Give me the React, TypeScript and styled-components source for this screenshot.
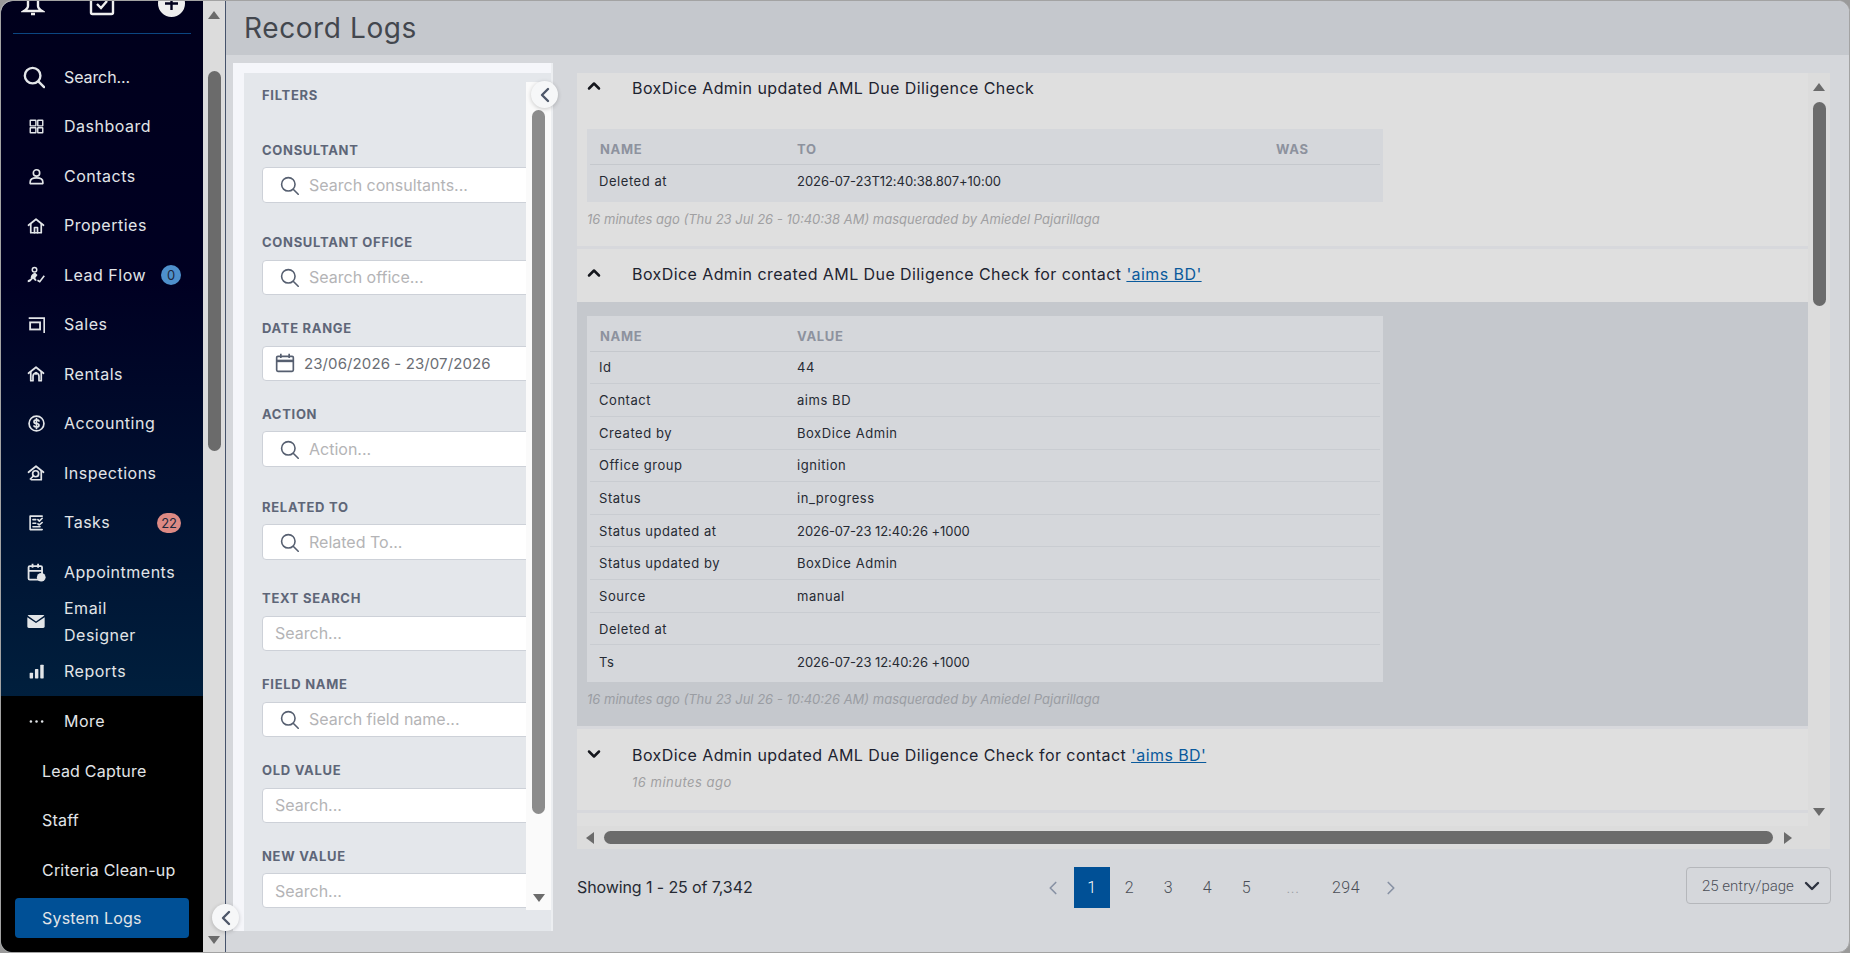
import React from "react";
import styled, { createGlobalStyle } from "styled-components";
import { ChevronDown, ChevronLeft, ChevronRight, ChevronUp } from "lucide-react";

const font = `Inter, "Noto Sans", sans-serif`;

const GlobalStyle = createGlobalStyle`
  html, body { margin: 0; padding: 0; background: #9a9a9a; }
  * { box-sizing: border-box; }
  body { font-family: ${font}; }
`;

const Frame = styled.div`
  width: 1850px;
  height: 953px;
  display: flex;
  overflow: hidden;
  position: relative;
  border-radius: 12px;
  border: 1px solid #a3a3a3;
  background: #d5d7db;
`;

const Side = styled.aside`
  width: 202px;
  flex: none;
  display: flex;
  flex-direction: column;
  background: linear-gradient(#00001c 0, #000022 280px, #001f3d 696px);
  color: #e2e5e8;
  font-size: 16px;
  letter-spacing: 0.5px;
  border-radius: 12px 0 0 12px;
`;

const TopIcons = styled.div`
  height: 33px;
  margin: 0 12px 0 12px;
  padding: 0 6px 0 8px;
  border-bottom: 1px solid #0b4682;
  display: flex;
  justify-content: space-between;
  overflow: hidden;
  color: #eee;
`;

const NavList = styled.div`
  padding: 18.4px 0 0.6px;
`;

const NavRow = styled.div`
  height: 49.5px;
  display: flex;
  align-items: center;
  position: relative;
  padding-left: 24px;
`;

const NavIcon = styled.span`
  width: 22px;
  height: 22px;
  display: flex;
  align-items: center;
  justify-content: center;
  margin-right: 17px;
  flex: none;
`;

const SearchIcon = styled(NavIcon)`
  margin-left: -2px;
  margin-right: 19px;
`;

const NavText = styled.span`
  line-height: 27px;
`;

const SearchText = styled(NavText)`
  letter-spacing: -0.1px;
`;

const Badge = styled.span<{ $bg: string }>`
  position: absolute;
  right: 22px;
  top: 50%;
  transform: translateY(-50%);
  min-width: 20px;
  height: 20px;
  padding: 0 4px;
  border-radius: 10px;
  background: ${(p) => p.$bg};
  color: #20283c;
  font-size: 13px;
  letter-spacing: 0;
  display: flex;
  align-items: center;
  justify-content: center;
`;

const MoreBlock = styled.div`
  flex: 1;
  background: #000;
`;

const SubRow = styled.div<{ $active?: boolean }>`
  height: ${(p) => (p.$active ? 40 : 49.5)}px;
  margin: ${(p) => (p.$active ? "4px 14px 0" : "0 14px")};
  padding-left: 27px;
  display: flex;
  align-items: center;
  border-radius: 4px;
  letter-spacing: 0.2px;
  background: ${(p) => (p.$active ? "#005096" : "transparent")};
`;

const Rail = styled.div`
  width: 23px;
  flex: none;
  background: #dcdcdc;
  border-right: 1px solid #46536b;
  position: relative;
  display: flex;
  flex-direction: column;
  align-items: center;
  padding-top: 10px;
`;

const RailThumb = styled.div`
  width: 13px;
  height: 380px;
  margin-top: 52px;
  background: #6b6b6b;
  border-radius: 7px;
`;

const Arrow = styled.div<{ $dir: "up" | "down" | "left" | "right" }>`
  width: 0;
  height: 0;
  flex: none;
  ${(p) =>
    p.$dir === "up"
      ? "border-left: 6px solid transparent; border-right: 6px solid transparent; border-bottom: 8px solid #6b6b6b;"
      : p.$dir === "down"
      ? "border-left: 6px solid transparent; border-right: 6px solid transparent; border-top: 8px solid #6b6b6b;"
      : p.$dir === "left"
      ? "border-top: 6px solid transparent; border-bottom: 6px solid transparent; border-right: 8px solid #6b6b6b;"
      : "border-top: 6px solid transparent; border-bottom: 6px solid transparent; border-left: 8px solid #6b6b6b;"}
`;

const RailArrowBottom = styled.div`
  position: absolute;
  bottom: 8px;
`;

const RoundToggle = styled.button<{ $x: number; $y: number }>`
  position: absolute;
  left: ${(p) => p.$x}px;
  top: ${(p) => p.$y}px;
  width: 27px;
  height: 27px;
  border: 0;
  padding: 0;
  border-radius: 50%;
  background: #f6f7f8;
  box-shadow: 0 1px 4px rgba(0, 0, 0, 0.2);
  color: #4e5769;
  display: flex;
  align-items: center;
  justify-content: center;
  z-index: 3;
`;

const Main = styled.main`
  flex: 1;
  min-width: 0;
  display: flex;
  flex-direction: column;
`;

const Header = styled.header`
  height: 54px;
  flex: none;
  background: #c5c8cd;
  padding: 0 0 1px 18px;
  display: flex;
  align-items: center;
  font-size: 28px;
  letter-spacing: 0.6px;
  color: #43474e;
`;

const Body = styled.div`
  flex: 1;
  min-height: 0;
  display: flex;
  padding: 8px 20px 0 7px;
`;

const FilterPanel = styled.section`
  width: 320px;
  height: 868px;
  flex: none;
  background: #f5f6fa;
  border-right: 2px solid #eceef1;
  padding: 10px 0 0 11px;
  display: flex;
  position: relative;
`;

const FilterInner = styled.div`
  width: 307px;
  height: 858px;
  flex: none;
  background: #e4e7eb;
  position: relative;
  overflow: hidden;
  padding: 13px 0 0 18px;
`;

const FilterScroll = styled.div`
  position: absolute;
  right: 0;
  top: 9px;
  width: 25px;
  height: 828px;
  background: #fafafa;
  display: flex;
  flex-direction: column;
  align-items: center;
`;

const FilterThumb = styled.div`
  margin-top: 28px;
  width: 13px;
  height: 704px;
  background: #8c8c8c;
  border-radius: 7px;
`;

const FilterScrollEnd = styled.div`
  margin-top: 80px;
`;

const FilterTitle = styled.div`
  font-size: 13px;
  font-weight: 700;
  letter-spacing: 0.7px;
  color: #5e6678;
  line-height: 18px;
  margin-bottom: 36.5px;
`;

const FilterLabel = styled(FilterTitle)`
  margin-bottom: 8.5px;
`;

const FieldGroup = styled.div<{ $gap: number }>`
  margin-bottom: ${(p) => p.$gap}px;
`;

const InputBox = styled.div<{ $tall?: boolean; $iconPad?: number }>`
  width: 290px;
  height: ${(p) => (p.$tall ? 36 : 35)}px;
  background: #fff;
  border: 1px solid #cdd1d8;
  border-radius: 4px;
  display: flex;
  align-items: center;
  padding-left: ${(p) => p.$iconPad ?? 12}px;
  color: #b4b4b6;
  font-size: 16px;
  letter-spacing: 0;
`;

const InputIcon = styled.span`
  display: flex;
  color: #565f70;
  margin-right: 10px;
`;

const DateIcon = styled(InputIcon)`
  margin-right: 9px;
`;

const DateText = styled.span`
  color: #6b6e75;
  font-size: 15px;
  letter-spacing: 0.1px;
`;

const LogColumn = styled.div`
  width: 1253px;
  margin-left: 24px;
  display: flex;
  flex-direction: column;
  flex: none;
`;

const LogViewport = styled.div`
  height: 776px;
  background: #dfdfdf;
  position: relative;
  margin-top: 10px;
  overflow: hidden;
  display: flex;
  flex-direction: column;
  flex: none;
`;

const LogScroll = styled.div`
  flex: 1;
  min-height: 0;
  width: 1231px;
  overflow: hidden;
  background: #d7d8dc;
`;

const LogItem = styled.div`
  background: #dfdfdf;
  margin-bottom: 3px;
`;

const LogHead = styled.div<{ $h: number }>`
  height: ${(p) => p.$h}px;
  position: relative;
  padding: 0 0 0 55px;
  display: flex;
  flex-direction: column;
  color: #1d2330;
  font-size: 16px;
  letter-spacing: 0.42px;
`;

const LogTitle = styled.div<{ $top: number }>`
  margin-top: ${(p) => p.$top}px;
  line-height: 22px;
`;

const HeadChevron = styled.span<{ $top: number }>`
  position: absolute;
  left: 7px;
  top: ${(p) => p.$top}px;
  color: #14161c;
  display: flex;
`;

const Linked = styled.a`
  color: #0a5a9c;
  text-decoration: underline;
`;

const Meta = styled.div<{ $pad?: string; $dim?: boolean }>`
  font-style: italic;
  font-size: 13px;
  letter-spacing: 0;
  color: ${(p) => (p.$dim ? "#9a9da3" : "#a0a0a2")};
  padding: ${(p) => p.$pad ?? "0"};
  line-height: 18px;
`;

const ShortMeta = styled(Meta)`
  letter-spacing: 0.5px;
`;

const LogBody = styled.div<{ $bg: string; $pad: string }>`
  background: ${(p) => p.$bg};
  padding: ${(p) => p.$pad};
`;

const Table = styled.div`
  width: 796px;
  background: #d5d7db;
  padding: 0 3px 4px;
`;

const HeadCells = styled.div`
  height: 36px;
  display: grid;
  grid-template-columns: 197px 479px 1fr;
  align-items: center;
  border-bottom: 1px solid #c5c8cd;
  padding: 5px 0 0 10px;
  color: #8d929e;
  font-weight: 700;
  font-size: 13px;
  letter-spacing: 0.7px;
`;

const Cells = styled.div<{ $last?: boolean }>`
  height: 32.65px;
  display: grid;
  grid-template-columns: 198px 479px 1fr;
  align-items: center;
  border-bottom: ${(p) => (p.$last ? "0" : "1px solid #c9ccd1")};
  padding: 0 0 0 9px;
  color: #262a33;
  font-size: 13px;
  letter-spacing: 0.55px;
`;

const StampCell = styled.span`
  letter-spacing: -0.05px;
`;

const HScroll = styled.div`
  height: 23px;
  width: 1253px;
  flex: none;
  display: flex;
  align-items: center;
  padding-left: 9px;
  background: #dcdcdc;
`;

const HThumb = styled.div`
  width: 1169px;
  height: 13px;
  background: #6b6b6b;
  border-radius: 7px;
  margin: 0 11px 0 10px;
`;

const VScroll = styled.div`
  position: absolute;
  right: 0;
  top: 0;
  bottom: 23px;
  width: 22px;
  display: flex;
  flex-direction: column;
  align-items: center;
  padding-top: 10px;
  background: #dcdcdc;
`;

const VThumb = styled.div`
  width: 13px;
  height: 204px;
  margin-top: 11px;
  background: #6b6b6b;
  border-radius: 7px;
`;

const VEnd = styled.div`
  margin-top: auto;
  margin-bottom: 10px;
`;

const Footer = styled.div`
  flex: 1;
  display: flex;
  align-items: center;
  position: relative;
  font-size: 16px;
  letter-spacing: -0.1px;
  color: #262a33;
  padding-bottom: 28px;
`;

const Pager = styled.div`
  position: absolute;
  left: 465px;
  top: 18px;
  display: flex;
  align-items: center;
  height: 41px;
  font-family: Roboto, sans-serif;
  font-weight: 300;
  font-size: 16px;
  letter-spacing: 0.5px;
`;

const PageCell = styled.span<{ $active?: boolean; $w?: number; $dim?: boolean }>`
  width: ${(p) => p.$w ?? 39}px;
  height: 41px;
  display: flex;
  align-items: center;
  justify-content: center;
  background: ${(p) => (p.$active ? "#005096" : "transparent")};
  color: ${(p) => (p.$active ? "#fff" : p.$dim ? "#9a9da3" : "#4a4e57")};
`;

const PagerArrow = styled.span<{ $left?: number; $right?: number }>`
  width: 22px;
  margin-left: ${(p) => p.$left ?? 0}px;
  margin-right: ${(p) => p.$right ?? 0}px;
  display: flex;
  justify-content: center;
  color: #8791a3;
`;

const PerPage = styled.div`
  position: absolute;
  right: -1px;
  top: 18px;
  width: 145px;
  height: 37px;
  border: 1px solid #b5b7bb;
  border-radius: 4px;
  font-family: Roboto, sans-serif;
  font-weight: 300;
  font-size: 15px;
  letter-spacing: 0;
  color: #4a4e57;
  display: flex;
  align-items: center;
  justify-content: space-between;
  padding: 0 6px 0 15px;
`;

/* sidebar icons, drawn to match the reference */
const Glyph = ({ children, size = 17 }: { children: React.ReactNode; size?: number }) => (
  <svg width={size} height={size} viewBox="0 0 24 24" fill="none" stroke="currentColor" strokeWidth="2.3" strokeLinecap="round" strokeLinejoin="round">
    {children}
  </svg>
);

const icons: Record<string, React.ReactNode> = {
  dashboard: (
    <Glyph size={15}>
      <rect x="2" y="2" width="9" height="9" rx="0.5" />
      <rect x="14" y="2" width="8" height="9" rx="0.5" />
      <rect x="2" y="14" width="9" height="8" rx="0.5" />
      <rect x="14" y="14" width="8" height="8" rx="0.5" />
    </Glyph>
  ),
  contacts: (
    <Glyph size={17}>
      <circle cx="12" cy="7" r="4.5" />
      <path d="M3 22v-2c0-4 3.5-6 9-6s9 2 9 6v2z" />
    </Glyph>
  ),
  properties: (
    <Glyph size={18}>
      <path d="M2 11 12 3l10 8" />
      <path d="M5 9v12h14V9" />
      <path d="M10 21v-7h4v7" />
    </Glyph>
  ),
  leadflow: (
    <svg width="18" height="18" viewBox="0 0 24 24" fill="currentColor">
      <circle cx="10" cy="5" r="3" fill="none" stroke="currentColor" strokeWidth="2" />
      <path d="M5 15c.5-3 3-6 6-6l3 3-3 4 2 3-2 1-3-3-4 4-3 .5V19l4-2z" />
      <path d="m14 19 3 2 6-8" fill="none" stroke="currentColor" strokeWidth="2.2" />
    </svg>
  ),
  sales: (
    <svg width="17" height="17" viewBox="0 0 24 24" fill="none" stroke="currentColor" strokeWidth="2.6">
      <path d="M1 3h22v21" />
      <rect x="3" y="9" width="14" height="10" />
    </svg>
  ),
  rentals: (
    <Glyph size={18}>
      <path d="M2 11 12 3l10 8" />
      <path d="M5 9v12h3v-6a4 4 0 0 1 8 0v6h3V9" />
      <circle cx="12" cy="11" r="1" />
    </Glyph>
  ),
  accounting: (
    <svg width="17" height="17" viewBox="0 0 24 24" fill="none" stroke="currentColor" strokeWidth="2.4" strokeLinecap="round">
      <circle cx="12" cy="12" r="10.5" />
      <path d="M15.5 8.5c-.6-1-1.8-1.5-3.5-1.5-2 0-3.5 1-3.5 2.5S10 12 12 12s3.5 1 3.5 2.5S14 17 12 17c-1.7 0-2.9-.5-3.5-1.5M12 5v14" />
    </svg>
  ),
  inspections: (
    <Glyph size={18}>
      <path d="M2 11 12 3l10 8" />
      <path d="M6 21h13V9" />
      <circle cx="11.5" cy="13" r="4" />
      <path d="m8.5 16-4 4" />
    </Glyph>
  ),
  tasks: (
    <Glyph size={17}>
      <path d="M20 3H3v19h17" />
      <path d="M7 8h4M7 13h4M7 18h10M14 8l2 2 4-4M14 14l2 1.5 4-3.5" />
    </Glyph>
  ),
  appointments: (
    <svg width="19" height="19" viewBox="0 0 24 24" fill="none" stroke="currentColor" strokeWidth="2.3">
      <rect x="2" y="4" width="17" height="17" rx="1.5" />
      <path d="M2 10h17M7 1v5M14 1v5" />
      <circle cx="18" cy="18" r="5.5" fill="currentColor" stroke="none" />
    </svg>
  ),
  email: (
    <svg width="18" height="13" viewBox="0 0 24 18" fill="currentColor">
      <path d="M2 0h20c.7 0 1.3.3 1.6.8L12 9 .4.8C.7.3 1.3 0 2 0z" />
      <path d="M0 3v13c0 1.1.9 2 2 2h20c1.1 0 2-.9 2-2V3l-12 8z" />
    </svg>
  ),
  reports: (
    <svg width="15" height="15" viewBox="0 0 24 24" fill="currentColor">
      <rect x="1" y="14" width="5.5" height="9" rx="1" />
      <rect x="9.5" y="8" width="5.5" height="15" rx="1" />
      <rect x="18" y="1" width="5.5" height="22" rx="1" />
    </svg>
  ),
  more: (
    <svg width="15" height="15" viewBox="0 0 24 24" fill="currentColor">
      <circle cx="3" cy="12" r="2" />
      <circle cx="12" cy="12" r="2" />
      <circle cx="21" cy="12" r="2" />
    </svg>
  ),
};

const SearchGlyph = ({ size = 19, stroke = 2 }: { size?: number; stroke?: number }) => (
  <svg width={size} height={size} viewBox="0 0 24 24" fill="none" stroke="currentColor" strokeWidth={stroke} strokeLinecap="round">
    <circle cx="10.5" cy="10.5" r="8.5" />
    <path d="m17 17 6 6" />
  </svg>
);

const CalendarGlyph = () => (
  <svg width="20" height="20" viewBox="0 0 24 24" fill="none" stroke="currentColor" strokeWidth="2">
    <rect x="2" y="4" width="20" height="18" rx="1.5" />
    <path d="M2 9.5h20" strokeWidth="3" />
    <path d="M7 1v5M17 1v5" />
  </svg>
);

const navItems = [
  { key: "dashboard", label: "Dashboard" },
  { key: "contacts", label: "Contacts" },
  { key: "properties", label: "Properties" },
  { key: "leadflow", label: "Lead Flow", badge: "0", badgeBg: "#4e90cc" },
  { key: "sales", label: "Sales" },
  { key: "rentals", label: "Rentals" },
  { key: "accounting", label: "Accounting" },
  { key: "inspections", label: "Inspections" },
  { key: "tasks", label: "Tasks", badge: "22", badgeBg: "#dd8a84" },
  { key: "appointments", label: "Appointments" },
];

const filters = [
  { label: "CONSULTANT", placeholder: "Search consultants...", icon: true, tall: true, gap: 30 },
  { label: "CONSULTANT OFFICE", placeholder: "Search office...", icon: true, gap: 24.5 },
  { label: "DATE RANGE", date: true, gap: 24 },
  { label: "ACTION", placeholder: "Action...", icon: true, tall: true, gap: 30.5 },
  { label: "RELATED TO", placeholder: "Related To...", icon: true, tall: true, gap: 29 },
  { label: "TEXT SEARCH", placeholder: "Search...", gap: 24.5 },
  { label: "FIELD NAME", placeholder: "Search field name...", icon: true, gap: 24.5 },
  { label: "OLD VALUE", placeholder: "Search...", gap: 24 },
  { label: "NEW VALUE", placeholder: "Search...", gap: 0 },
];

const createdRows = [
  ["Id", "44"],
  ["Contact", "aims BD"],
  ["Created by", "BoxDice Admin"],
  ["Office group", "ignition"],
  ["Status", "in_progress"],
  ["Status updated at", "2026-07-23 12:40:26 +1000"],
  ["Status updated by", "BoxDice Admin"],
  ["Source", "manual"],
  ["Deleted at", ""],
  ["Ts", "2026-07-23 12:40:26 +1000"],
];

export default function App() {
  return (
    <>
      <GlobalStyle />
      <Frame>
        <Side>
          <TopIcons>
            <svg width="24" height="17" viewBox="0 0 24 17" fill="none" stroke="currentColor" strokeWidth="2.4" style={{ marginTop: -2 }}>
              <path d="M7 0v7c0 2-1 3-4 5h18c-3-2-4-3-4-5V0" />
              <path d="M10 15h4" />
            </svg>
            <svg width="26" height="16" viewBox="0 0 26 16" fill="none" stroke="currentColor" strokeWidth="2.4" style={{ marginTop: -1 }}>
              <path d="M2 0v12.5c0 1 .5 1.5 1.5 1.5h19c1 0 1.5-.5 1.5-1.5V0" />
              <path d="m8 4 4 4 6-7" />
            </svg>
            <svg width="27" height="16" viewBox="0 0 27 16">
              <circle cx="13.5" cy="2.5" r="13.5" fill="currentColor" />
              <path d="M13.5 0v9M7 2.5h13" stroke="#00001c" strokeWidth="2.4" />
            </svg>
          </TopIcons>
          <NavList>
            <NavRow>
              <SearchIcon>
                <SearchGlyph size={24} stroke={2.6} />
              </SearchIcon>
              <SearchText>Search...</SearchText>
            </NavRow>
            {navItems.map((item) => (
              <NavRow key={item.key}>
                <NavIcon>{icons[item.key]}</NavIcon>
                <NavText>{item.label}</NavText>
                {item.badge && <Badge $bg={item.badgeBg as string}>{item.badge}</Badge>}
              </NavRow>
            ))}
            <NavRow>
              <NavIcon>{icons.email}</NavIcon>
              <NavText>
                Email
                <br />
                Designer
              </NavText>
            </NavRow>
            <NavRow>
              <NavIcon>{icons.reports}</NavIcon>
              <NavText>Reports</NavText>
            </NavRow>
          </NavList>
          <MoreBlock>
            <NavRow>
              <NavIcon>{icons.more}</NavIcon>
              <NavText>More</NavText>
            </NavRow>
            <SubRow>Lead Capture</SubRow>
            <SubRow>Staff</SubRow>
            <SubRow>Criteria Clean-up</SubRow>
            <SubRow $active>System Logs</SubRow>
          </MoreBlock>
        </Side>
        <Rail>
          <Arrow $dir="up" />
          <RailThumb />
          <RailArrowBottom>
            <Arrow $dir="down" />
          </RailArrowBottom>
        </Rail>
        <RoundToggle $x={211} $y={903}>
          <ChevronLeft size={24} strokeWidth={2.4} />
        </RoundToggle>
        <Main>
          <Header>Record Logs</Header>
          <Body>
            <FilterPanel>
              <FilterInner>
                <FilterTitle>FILTERS</FilterTitle>
                {filters.map((f) => (
                  <FieldGroup key={f.label} $gap={f.gap}>
                    <FilterLabel>{f.label}</FilterLabel>
                    {f.date ? (
                      <InputBox $iconPad={12}>
                        <DateIcon>
                          <CalendarGlyph />
                        </DateIcon>
                        <DateText>23/06/2026 - 23/07/2026</DateText>
                      </InputBox>
                    ) : (
                      <InputBox $tall={f.tall} $iconPad={f.icon ? 17 : 12}>
                        {f.icon && (
                          <InputIcon>
                            <SearchGlyph size={19} />
                          </InputIcon>
                        )}
                        {f.placeholder}
                      </InputBox>
                    )}
                  </FieldGroup>
                ))}
                <FilterScroll>
                  <FilterThumb />
                  <FilterScrollEnd>
                    <Arrow $dir="down" />
                  </FilterScrollEnd>
                </FilterScroll>
              </FilterInner>
              <RoundToggle $x={298} $y={18}>
                <ChevronLeft size={24} strokeWidth={2.4} />
              </RoundToggle>
            </FilterPanel>
            <LogColumn>
              <LogViewport>
                <LogScroll>
                  <LogItem>
                    <LogHead $h={56}>
                      <HeadChevron $top={3}>
                        <ChevronUp size={20} strokeWidth={3} />
                      </HeadChevron>
                      <LogTitle $top={4}>BoxDice Admin updated AML Due Diligence Check</LogTitle>
                    </LogHead>
                    <LogBody $bg="#dfdfdf" $pad="0 0 0 10px">
                      <Table>
                        <HeadCells>
                          <span>NAME</span>
                          <span>TO</span>
                          <span>WAS</span>
                        </HeadCells>
                        <Cells $last>
                          <span>Deleted at</span>
                          <StampCell>2026-07-23T12:40:38.807+10:00</StampCell>
                          <span />
                        </Cells>
                      </Table>
                      <Meta $pad="8px 0 18px">16 minutes ago (Thu 23 Jul 26 - 10:40:38 AM) masqueraded by Amiedel Pajarillaga</Meta>
                    </LogBody>
                  </LogItem>
                  <LogItem>
                    <LogHead $h={53}>
                      <HeadChevron $top={14}>
                        <ChevronUp size={20} strokeWidth={3} />
                      </HeadChevron>
                      <LogTitle $top={14}>
                        BoxDice Admin created AML Due Diligence Check for contact <Linked>'aims BD'</Linked>
                      </LogTitle>
                    </LogHead>
                    <LogBody $bg="#c5c8cd" $pad="14px 0 0 10px">
                      <Table>
                        <HeadCells>
                          <span>NAME</span>
                          <span>VALUE</span>
                          <span />
                        </HeadCells>
                        {createdRows.map((row, i) => (
                          <Cells key={row[0]} $last={i === createdRows.length - 1}>
                            <span>{row[0]}</span>
                            {row[1].startsWith("2026") ? <StampCell>{row[1]}</StampCell> : <span>{row[1]}</span>}
                            <span />
                          </Cells>
                        ))}
                      </Table>
                      <Meta $pad="8px 0 18px" $dim>
                        16 minutes ago (Thu 23 Jul 26 - 10:40:26 AM) masqueraded by Amiedel Pajarillaga
                      </Meta>
                    </LogBody>
                  </LogItem>
                  <LogItem>
                    <LogHead $h={81}>
                      <HeadChevron $top={15}>
                        <ChevronDown size={20} strokeWidth={3} />
                      </HeadChevron>
                      <LogTitle $top={15}>
                        BoxDice Admin updated AML Due Diligence Check for contact <Linked>'aims BD'</Linked>
                      </LogTitle>
                      <ShortMeta $pad="7px 0 0">16 minutes ago</ShortMeta>
                    </LogHead>
                  </LogItem>
                  <LogItem>
                    <LogHead $h={20} />
                  </LogItem>
                </LogScroll>
                <VScroll>
                  <Arrow $dir="up" />
                  <VThumb />
                  <VEnd>
                    <Arrow $dir="down" />
                  </VEnd>
                </VScroll>
                <HScroll>
                  <Arrow $dir="left" />
                  <HThumb />
                  <Arrow $dir="right" />
                </HScroll>
              </LogViewport>
              <Footer>
                Showing 1 - 25 of 7,342
                <Pager>
                  <PagerArrow $right={10}>
                    <ChevronLeft size={26} strokeWidth={1.8} />
                  </PagerArrow>
                  <PageCell $active $w={36}>
                    1
                  </PageCell>
                  <PageCell>2</PageCell>
                  <PageCell>3</PageCell>
                  <PageCell>4</PageCell>
                  <PageCell>5</PageCell>
                  <PageCell $w={54} $dim>
                    ...
                  </PageCell>
                  <PageCell $w={52}>294</PageCell>
                  <PagerArrow $left={8}>
                    <ChevronRight size={26} strokeWidth={1.8} />
                  </PagerArrow>
                </Pager>
                <PerPage>
                  25 entry/page
                  <ChevronDown size={24} strokeWidth={2.4} color="#2e3340" />
                </PerPage>
              </Footer>
            </LogColumn>
          </Body>
        </Main>
      </Frame>
    </>
  );
}
